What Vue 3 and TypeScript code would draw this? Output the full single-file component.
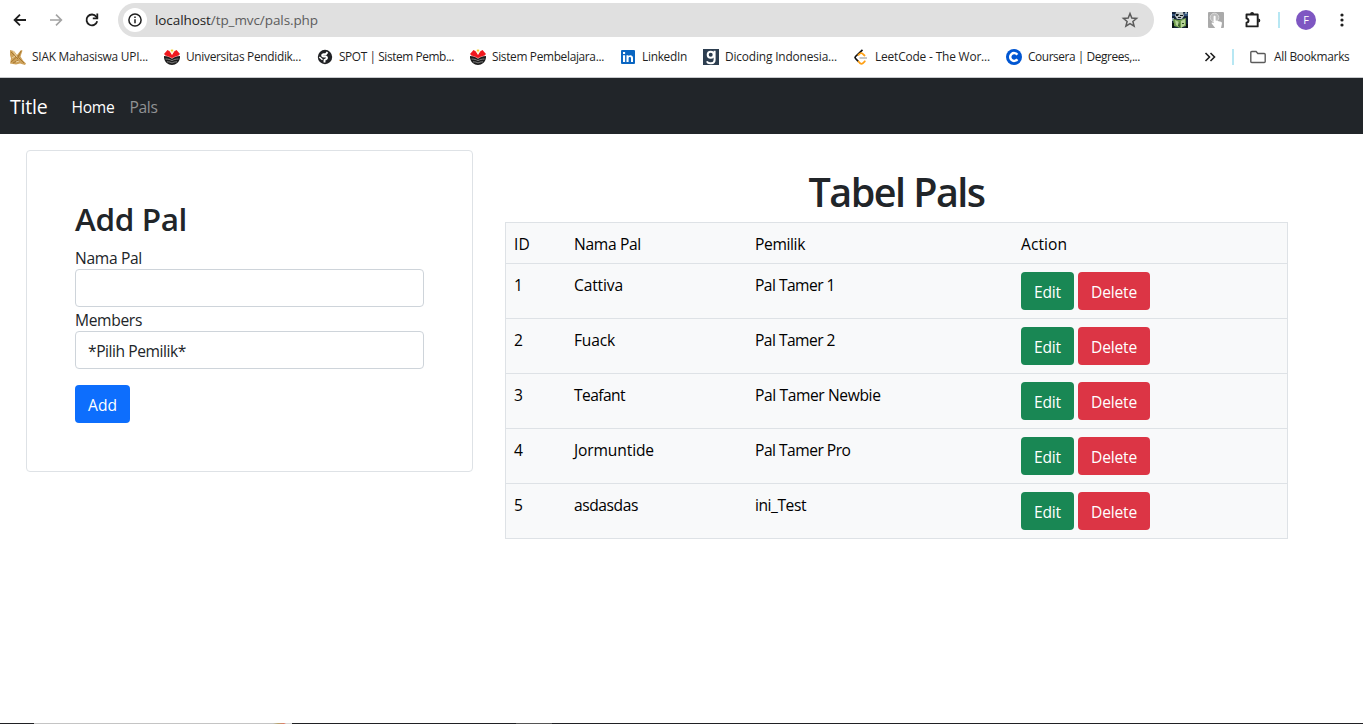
<script setup lang="ts">
interface Bookmark { icon: string; label: string; width: number }
interface Pal { id: number; name: string; nameWidth: number; owner: string; ownerWidth: number }

const bookmarks: Bookmark[] = [
  { icon: 'siak', label: 'SIAK Mahasiswa UPI...', width: 116 },
  { icon: 'upi', label: 'Universitas Pendidik...', width: 115 },
  { icon: 'spot', label: 'SPOT | Sistem Pemb...', width: 115 },
  { icon: 'upi', label: 'Sistem Pembelajara...', width: 112 },
  { icon: 'linkedin', label: 'LinkedIn', width: 45 },
  { icon: 'dicoding', label: 'Dicoding Indonesia...', width: 112 },
  { icon: 'leetcode', label: 'LeetCode - The Wor...', width: 115 },
  { icon: 'coursera', label: 'Coursera | Degrees,...', width: 112 },
]

const pals: Pal[] = [
  { id: 1, name: 'Cattiva', nameWidth: 49, owner: 'Pal Tamer 1', ownerWidth: 80 },
  { id: 2, name: 'Fuack', nameWidth: 41, owner: 'Pal Tamer 2', ownerWidth: 80 },
  { id: 3, name: 'Teafant', nameWidth: 51, owner: 'Pal Tamer Newbie', ownerWidth: 125.5 },
  { id: 4, name: 'Jormuntide', nameWidth: 80, owner: 'Pal Tamer Pro', ownerWidth: 95.5 },
  { id: 5, name: 'asdasdas', nameWidth: 64, owner: 'ini_Test', ownerWidth: 51 },
]

// Tracks a label so that it spans the given width in pixels.
const vFit = {
  mounted(el: HTMLElement, binding: { value: number }) {
    const count = (el.textContent ?? '').length
    const natural = el.getBoundingClientRect().width
    el.style.letterSpacing = `${(binding.value - natural) / count}px`
  },
}
</script>

<template>
  <div class="window">
    <header class="browser">
      <div class="toolbar">
        <svg class="tool back" viewBox="0 0 16 16"><path d="M14 8H3M8 2.6 2.6 8 8 13.4" fill="none" stroke="#1f1f1f" stroke-width="1.8" /></svg>
        <svg class="tool forward" viewBox="0 0 16 16"><path d="M2 8h11M8 2.6 13.4 8 8 13.4" fill="none" stroke="#a3a3a3" stroke-width="1.6" /></svg>
        <svg class="tool reload" viewBox="0 0 16 16"><path d="M13.2 9.2A5.4 5.4 0 1 1 12.3 4.7L13.6 6" fill="none" stroke="#1f1f1f" stroke-width="1.8" /><path d="M14.2 1.6v5.6H8.8V5.6h3.6v-4z" fill="#1f1f1f" /></svg>
        <div class="omnibox">
          <span class="site-info">
            <svg viewBox="0 0 16 16"><circle cx="8" cy="8" r="6.1" fill="none" stroke="#1f1f1f" stroke-width="1.5" /><path d="M8 7.2v4M8 4.5v1.6" stroke="#1f1f1f" stroke-width="1.5" /></svg>
          </span>
          <span v-fit="163" class="url"><b>localhost</b>/tp_mvc/pals.php</span>
          <svg class="star" viewBox="0 0 18 18"><path d="m9 2.500 1.800 4.500 4.800.4-3.700 3.100 1.200 4.700L9 12.700l-4.100 2.500 1.200-4.700-3.700-3.100L7.200 7z" fill="none" stroke="#5b5b5b" stroke-width="1.500" /></svg>
        </div>
        <svg class="ext-photo" viewBox="0 0 16 16">
          <rect width="16" height="16" fill="#14233a" />
          <path d="M0 2h3v2H0zM12 1h4v3h-4z" fill="#35557c" /><path d="M13 0h2v2h-2zM0 6h2v3H0z" fill="#93a8b5" />
          <path d="M4 0h7l1 4-2 3H5L3 4z" fill="#b9c2c3" /><path d="M4 2h3l-1 2H4zM8 3h3v1H8zM6 5h3v1H6z" fill="#10191c" />
          <path d="M1 7l6 1 7-2v8l-6 2-6-2z" fill="#6e9c4a" /><path d="m3 8 4 2v5l-3-2zM9 9l4-2v6l-4 3z" fill="#b5d397" /><path d="m7 9 1 6-2-1zM10 11h2v1h-2z" fill="#2b4d23" /><path d="M0 11h2v5H0zM14 12h2v4h-2z" fill="#0c1613" />
        </svg>
        <svg class="ext-touch" viewBox="0 0 16 16">
          <rect width="16" height="16" rx="1" fill="#aaa" /><circle cx="6.500" cy="5.500" r="4.300" fill="#bdbdbd" stroke="#dadada" />
          <path d="M5.600 4.500c0-1 2-1 2 0v4l5.200 1.200c1 .3 1.300.9 1.100 2L13 16H7.200l-3.500-4.500c-.4-1 .6-1.600 1.900-.3z" fill="#fff" />
        </svg>
        <svg class="puzzle" viewBox="0 0 20 20"><path d="M4.500 4.500h11.200v11.900H4.500v-3.600c2.700-.4 2.700-4 0-4.400z" fill="none" stroke="#1f1f1f" stroke-width="1.900" stroke-linejoin="round" /><path d="M8.100 4a2 2 0 0 1 4 0zM16.300 8.400a2 2 0 0 1 0 4z" fill="#1f1f1f" /></svg>
        <i class="divider top-divider"></i>
        <span class="avatar">F</span>
        <svg class="kebab" viewBox="0 0 4 16"><circle cx="2" cy="3" r="1.600" fill="#1f1f1f" /><circle cx="2" cy="8" r="1.600" fill="#1f1f1f" /><circle cx="2" cy="13" r="1.600" fill="#1f1f1f" /></svg>
      </div>

      <div class="bookmarks">
        <div v-for="(mark, i) in bookmarks" :key="i" class="bookmark">
          <svg v-if="mark.icon === 'siak'" viewBox="0 0 16 16">
            <path d="M0 1 4 2l3 4 4-5 1.500.5-2 6 2.500 4 3 3-1 1.500-5-1.500-4 1-6-1 1-5L0 6z" fill="#cda15a" /><path d="m1 3 7 7M1 13l9-8M9 9l5 5M3 14l6-3M11 2 8 9" stroke="#a87830" stroke-width="1" /><path d="m3 2 4 6M2 9l3-2M6 13l3-1" stroke="#ecd3a4" />
          </svg>
          <svg v-else-if="mark.icon === 'upi'" viewBox="0 0 16 16">
            <path d="M0 5 3.500 1 6 2.500 8 6l2-3.500L12.500 1 16 5l-3 3-5 1.500L3 8z" fill="#f0191e" /><path d="M5.300 1.500 7 .3h2l1.700 1.200L8 5.500z" fill="#fff6d8" /><circle cx="8" cy="1.600" r="1.100" fill="#f3d52d" />
            <path d="m2 7 3 1 3 1.500L11 8l3-1" fill="none" stroke="#fff" stroke-width=".6" />
            <path d="M0 7c3 0 5 1 8 2.800C11 8 13 7 16 7v1.500c-.6 4.700-4 7.500-8 7.500S.6 13.200 0 8.500z" fill="#1c1c1c" /><path d="M1.500 10c3 0 4.500.6 6.500 1.600 2-1 3.500-1.600 6.500-1.600M3 12.800c2.500 0 3.500.4 5 1.200 1.500-.8 2.500-1.200 5-1.200" fill="none" stroke="#9a9a9a" stroke-width=".8" />
          </svg>
          <svg v-else-if="mark.icon === 'spot'" viewBox="0 0 16 16">
            <circle cx="8" cy="8" r="7.200" fill="#202124" /><path d="M10.500 3.200 8.800 5.200H6.500C4.500 5.500 4.800 7.500 6.500 7.500h2c1.800 0 2 2 .6 2.600L7.500 11v2.500" fill="none" stroke="#fff" stroke-width="1.900" /><path d="m2.300 8 3.200 2.800" stroke="#fff" stroke-width="1.500" />
          </svg>
          <svg v-else-if="mark.icon === 'linkedin'" viewBox="0 0 16 16">
            <rect x="1" y="1" width="14" height="14" rx="1" fill="#0a66c2" /><path d="M3 6.200h2.100V13H3zM3 3h2.100v2H3zM6.500 6.200h2v1c1-1.700 4.500-1.500 4.500 1.600V13h-2V9.400c0-2-2.400-1.800-2.400 0V13H6.500z" fill="#fff" />
          </svg>
          <svg v-else-if="mark.icon === 'dicoding'" viewBox="0 0 16 16">
            <rect width="16" height="16" fill="#2d3e50" /><circle cx="7.700" cy="5.700" r="3" fill="none" stroke="#fff" stroke-width="2" /><path d="M11.600 1.700v9.200c0 4.200-6.500 4.300-7.700 1.500" fill="none" stroke="#fff" stroke-width="2" />
          </svg>
          <svg v-else-if="mark.icon === 'leetcode'" viewBox="0 0 16 16">
            <path d="M9.500.8 2.500 7.500q-1 1 0 2l3.200 3.300" fill="none" stroke="#111" stroke-width="1.700" /><path d="m5.500 12.500 1.600 1.800q1.400 1 2.700 0l2-2M5.500 5.800q2.300-2.500 4-1.200l2 1.900" fill="none" stroke="#ffa116" stroke-width="1.800" stroke-linecap="round" /><path d="M6.500 9H14" stroke="#b3b3b3" stroke-width="1.500" />
          </svg>
          <svg v-else viewBox="0 0 16 16">
            <circle cx="8" cy="8" r="8" fill="#0056d2" /><path d="M11.300 5.800a3.900 3.900 0 1 0 0 4.400" fill="none" stroke="#fff" stroke-width="2.500" />
          </svg>
          <span v-fit="mark.width">{{ mark.label }}</span>
        </div>
        <svg class="chevrons" viewBox="0 0 12 10"><path d="m1.500 1 4 4-4 4M6.500 1l4 4-4 4" fill="none" stroke="#1f1f1f" stroke-width="1.600" /></svg>
        <i class="divider"></i>
        <svg class="folder" viewBox="0 0 16 14"><path d="M1.800 1.500h4.300l1.700 2h6.400q1 0 1 1v7q0 1-1 1H1.800q-1 0-1-1v-9q0-1 1-1z" fill="none" stroke="#5b5b5b" stroke-width="1.400" /></svg>
        <span v-fit="75.5" class="all">All Bookmarks</span>
      </div>
    </header>

    <nav class="navbar">
      <a v-fit="37.5" class="brand">Title</a>
      <a v-fit="43" class="link active">Home</a>
      <a v-fit="28" class="link">Pals</a>
    </nav>

    <main>
      <form class="card" @submit.prevent>
        <h2><span v-fit="112">Add Pal</span></h2>
        <label for="name"><span v-fit="67">Nama Pal</span></label>
        <input id="name" type="text" class="control">
        <label><span v-fit="67">Members</span></label>
        <div class="control"><span v-fit="98">*Pilih Pemilik*</span></div>
        <button class="btn add"><span v-fit="29">Add</span></button>
      </form>

      <section class="listing">
        <h1><span v-fit="176">Tabel Pals</span></h1>
        <div class="table">
          <div class="row">
            <span><span v-fit="16">ID</span></span>
            <span><span v-fit="67">Nama Pal</span></span>
            <span><span v-fit="50">Pemilik</span></span>
            <span><span v-fit="46">Action</span></span>
          </div>
          <div v-for="pal in pals" :key="pal.id" class="row">
            <span>{{ pal.id }}</span>
            <span><span v-fit="pal.nameWidth">{{ pal.name }}</span></span>
            <span><span v-fit="pal.ownerWidth">{{ pal.owner }}</span></span>
            <div class="actions">
              <button class="btn edit"><span v-fit="27">Edit</span></button>
              <button class="btn delete"><span v-fit="46">Delete</span></button>
            </div>
          </div>
        </div>
      </section>
    </main>
    <footer class="taskbar"></footer>
  </div>
</template>

<style>
body { margin: 0; overflow: hidden; }
</style>

<style scoped>
* { box-sizing: border-box; }
.window { width: 1363px; height: 724px; display: flex; flex-direction: column; background: #fff; color: #212529; font: 15.6px/24px "Open Sans", "Noto Sans", sans-serif; }
span, a { white-space: nowrap; }
svg { display: block; flex: none; }
.browser { height: 78px; flex: none; border-bottom: 1px solid #c8cacd; color: #1f1f1f; }
.toolbar { height: 40px; display: flex; align-items: center; padding-left: 12px; }
.tool { width: 16px; height: 16px; }
.forward { margin-left: 20px; }
.reload { margin-left: 20px; }
.omnibox { width: 1036px; height: 34px; margin-left: 18px; padding-left: 5px; border-radius: 17px; background: #e0e0e0; display: flex; align-items: center; }
.site-info { width: 24px; height: 24px; border-radius: 50%; background: #fff; display: grid; place-items: center; }
.site-info svg { width: 16px; height: 16px; }
.url { margin-left: 8px; font-size: 13.5px; line-height: 20px; color: #5c5c5c; }
.url b { font-weight: 400; color: #1f1f1f; }
.star { width: 18px; height: 18px; margin-left: auto; margin-right: 15px; }
.ext-photo { width: 16px; height: 16px; margin-left: 18px; }
.ext-touch { width: 16px; height: 16px; margin-left: 20px; }
.puzzle { width: 20px; height: 20px; margin-left: 18px; }
.divider { width: 2px; height: 16px; background: #b7e7f3; flex: none; }
.top-divider { margin-left: 16px; }
.avatar { width: 20px; height: 20px; margin-left: 16px; border-radius: 50%; background: #7e57c2; color: #fff; font-size: 11px; line-height: 20px; text-align: center; }
.kebab { width: 4px; height: 16px; margin-left: 24px; }
.bookmarks { height: 34px; display: flex; align-items: center; padding-left: 10px; font-size: 11.9px; line-height: 16px; }
.bookmark { height: 16px; display: flex; align-items: center; gap: 6px; margin-right: 16px; }
.bookmark span, .all { padding-bottom: 2px; }
.bookmark svg { width: 16px; height: 16px; }
.chevrons { width: 12px; height: 10px; margin-left: 48px; }
.bookmarks .divider { margin-left: 16px; }
.folder { width: 16px; height: 14px; margin-left: 16px; }
.all { margin-left: 8px; }
.navbar { height: 56px; flex: none; display: flex; align-items: center; background: #212529; color: #fff; padding: 2px 10px 0; }
.brand { font-size: 19.5px; line-height: 30px; margin-right: 24px; }
.link { color: #909294; margin-right: 15px; }
.link.active { color: #fff; }
main { flex: 1; display: flex; align-items: flex-start; padding: 16px 0 0 26px; }
.card { width: 447px; height: 322px; padding: 48px; border: 1px solid #dee2e6; border-radius: 4px; display: flex; flex-direction: column; align-items: stretch; }
h1, h2 { margin: 0; font-weight: 540; }
h2 { padding-top: 1px; font-size: 31.5px; line-height: 38px; margin-bottom: 7px; }
h1 { padding-top: 2px; font-size: 39.5px; line-height: 48px; margin-bottom: 6px; text-align: center; }
label { height: 24px; padding-top: 1px; }
.control { width: 100%; height: 38px; border: 1px solid #ced4da; border-radius: 4px; padding: 7px 12px 5px; background: #fff; font: inherit; }
.btn { height: 38px; padding: 2px 0 0 13px; border: 0; border-radius: 4px; color: #fff; font: inherit; text-align: left; }
.add { width: 55px; margin-top: 16px; background: #0d6efd; }
.edit { width: 53px; background: #198754; }
.delete { width: 72px; background: #dc3545; }
.listing { width: 783px; margin: 16px 0 0 32px; }
.table { border: 1px solid #dee2e6; background: #f8f9fa; color: #000; }
.row { display: grid; grid-template-columns: 60px 181px 266px 1fr; padding: 8px; border-bottom: 1px solid #dee2e6; }
.row:last-child { border-bottom: 0; }
.row:first-child { height: 41px; }
.row > span { padding-top: 1px; }
.actions { display: flex; gap: 4px; }
.taskbar { height: 1px; flex: none; background: linear-gradient(90deg, #202124 34px, #c4c4c4 34px 273px, #b7a56e 278px, #df7b68 284px, #d8d8d8 286px 292px, #202124 292px 516px, #555 516px 552px, #202124 552px); }
</style>
